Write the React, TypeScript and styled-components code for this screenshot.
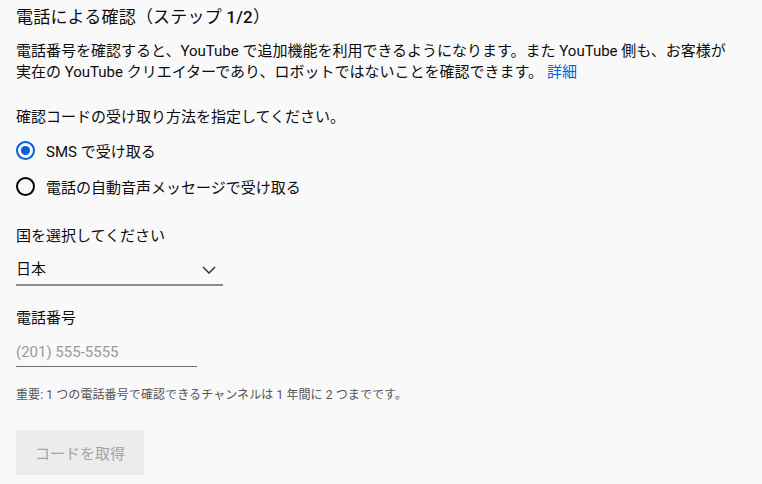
import React, { useState } from 'react'
import styled, { createGlobalStyle } from 'styled-components'

const GlobalStyle = createGlobalStyle`
  html, body {
    margin: 0;
    padding: 0;
    background: #f9f9f9;
  }
  body {
    font-family: Roboto, "Noto Sans CJK JP", sans-serif;
    color: #0d0d0d;
  }
`

const Page = styled.div`
  padding: 5px 16px 0;
  min-height: 100vh;
  box-sizing: border-box;
  background: #f9f9f9;
`

const Title = styled.h1`
  margin: 0;
  font-size: 17px;
  line-height: 24px;
  font-weight: 400;
  letter-spacing: 0.2px;
`

const Step = styled.span`
  font-weight: 500;
`

const Description = styled.p`
  margin: 12px 0 0;
  font-size: 15px;
  line-height: 21px;
`

const Link = styled.a`
  color: #065fd4;
  text-decoration: none;
  margin-left: 4px;
  cursor: pointer;
`

const Label = styled.div<{ $gap: number }>`
  margin-top: ${({ $gap }) => $gap}px;
  font-size: 15px;
  line-height: 21px;
`

const RadioGroup = styled.div`
  margin-top: 4px;
  display: flex;
  flex-direction: column;
`

const RadioRow = styled.label`
  display: flex;
  align-items: center;
  gap: 11px;
  height: 36px;
  font-size: 15px;
  cursor: pointer;
`

const RadioCircle = styled.span<{ $checked: boolean }>`
  width: 19px;
  height: 19px;
  box-sizing: border-box;
  border-radius: 50%;
  border: 2px solid ${({ $checked }) => ($checked ? '#065fd4' : '#030303')};
  display: flex;
  align-items: center;
  justify-content: center;

  &::after {
    content: '';
    width: 9px;
    height: 9px;
    border-radius: 50%;
    background: #065fd4;
    display: ${({ $checked }) => ($checked ? 'block' : 'none')};
  }
`

const Select = styled.div`
  margin-top: 8px;
  width: 207px;
  padding: 4px 0;
  border-bottom: 2px solid #8c8c8c;
  display: flex;
  align-items: center;
  justify-content: space-between;
  font-size: 15px;
  line-height: 21px;
  cursor: pointer;
`

const Chevron = styled.svg`
  margin-right: 7px;
`

const PhoneInput = styled.input`
  display: block;
  margin-top: 8px;
  width: 181px;
  box-sizing: border-box;
  padding: 4px 0;
  border: none;
  border-bottom: 1px solid #6f6f6f;
  background: transparent;
  font-family: Roboto, "Noto Sans CJK JP", sans-serif;
  font-size: 15px;
  line-height: 21px;
  height: 30px;
  outline: none;
  color: #0d0d0d;

  &::placeholder {
    color: #9a9a9a;
  }
`

const Note = styled.div`
  margin-top: 19px;
  font-size: 12px;
  line-height: 18px;
  letter-spacing: 0.1px;
  color: #555;
`

const SubmitButton = styled.button`
  margin-top: 26px;
  width: 128px;
  height: 45px;
  border: none;
  border-radius: 0;
  background: #ececec;
  color: #a3a3a3;
  font-family: Roboto, "Noto Sans CJK JP", sans-serif;
  font-size: 15px;
  cursor: default;
`

export default function App() {
  const [method, setMethod] = useState<'sms' | 'voice'>('sms')
  const [phone, setPhone] = useState('')

  return (
    <Page>
      <GlobalStyle />
      <Title>
        電話による確認（ステップ <Step>1/2</Step>）
      </Title>
      <Description>
        電話番号を確認すると、YouTube で追加機能を利用できるようになります。また YouTube 側も、お客様が
        <br />
        実在の YouTube クリエイターであり、ロボットではないことを確認できます。
        <Link>詳細</Link>
      </Description>

      <Label $gap={24}>確認コードの受け取り方法を指定してください。</Label>
      <RadioGroup>
        <RadioRow onClick={() => setMethod('sms')}>
          <RadioCircle $checked={method === 'sms'} />
          SMS で受け取る
        </RadioRow>
        <RadioRow onClick={() => setMethod('voice')}>
          <RadioCircle $checked={method === 'voice'} />
          電話の自動音声メッセージで受け取る
        </RadioRow>
      </RadioGroup>

      <Label $gap={22}>国を選択してください</Label>
      <Select>
        <span>日本</span>
        <Chevron width="14" height="8" viewBox="0 0 14 8">
          <polyline points="1,1 7,7 13,1" fill="none" stroke="#333" strokeWidth="1.5" />
        </Chevron>
      </Select>

      <Label $gap={22}>電話番号</Label>
      <PhoneInput
        value={phone}
        placeholder="(201) 555-5555"
        onChange={(e) => setPhone(e.target.value)}
      />

      <Note>重要: 1 つの電話番号で確認できるチャンネルは 1 年間に 2 つまでです。</Note>

      <SubmitButton disabled={!phone}>コードを取得</SubmitButton>
    </Page>
  )
}
